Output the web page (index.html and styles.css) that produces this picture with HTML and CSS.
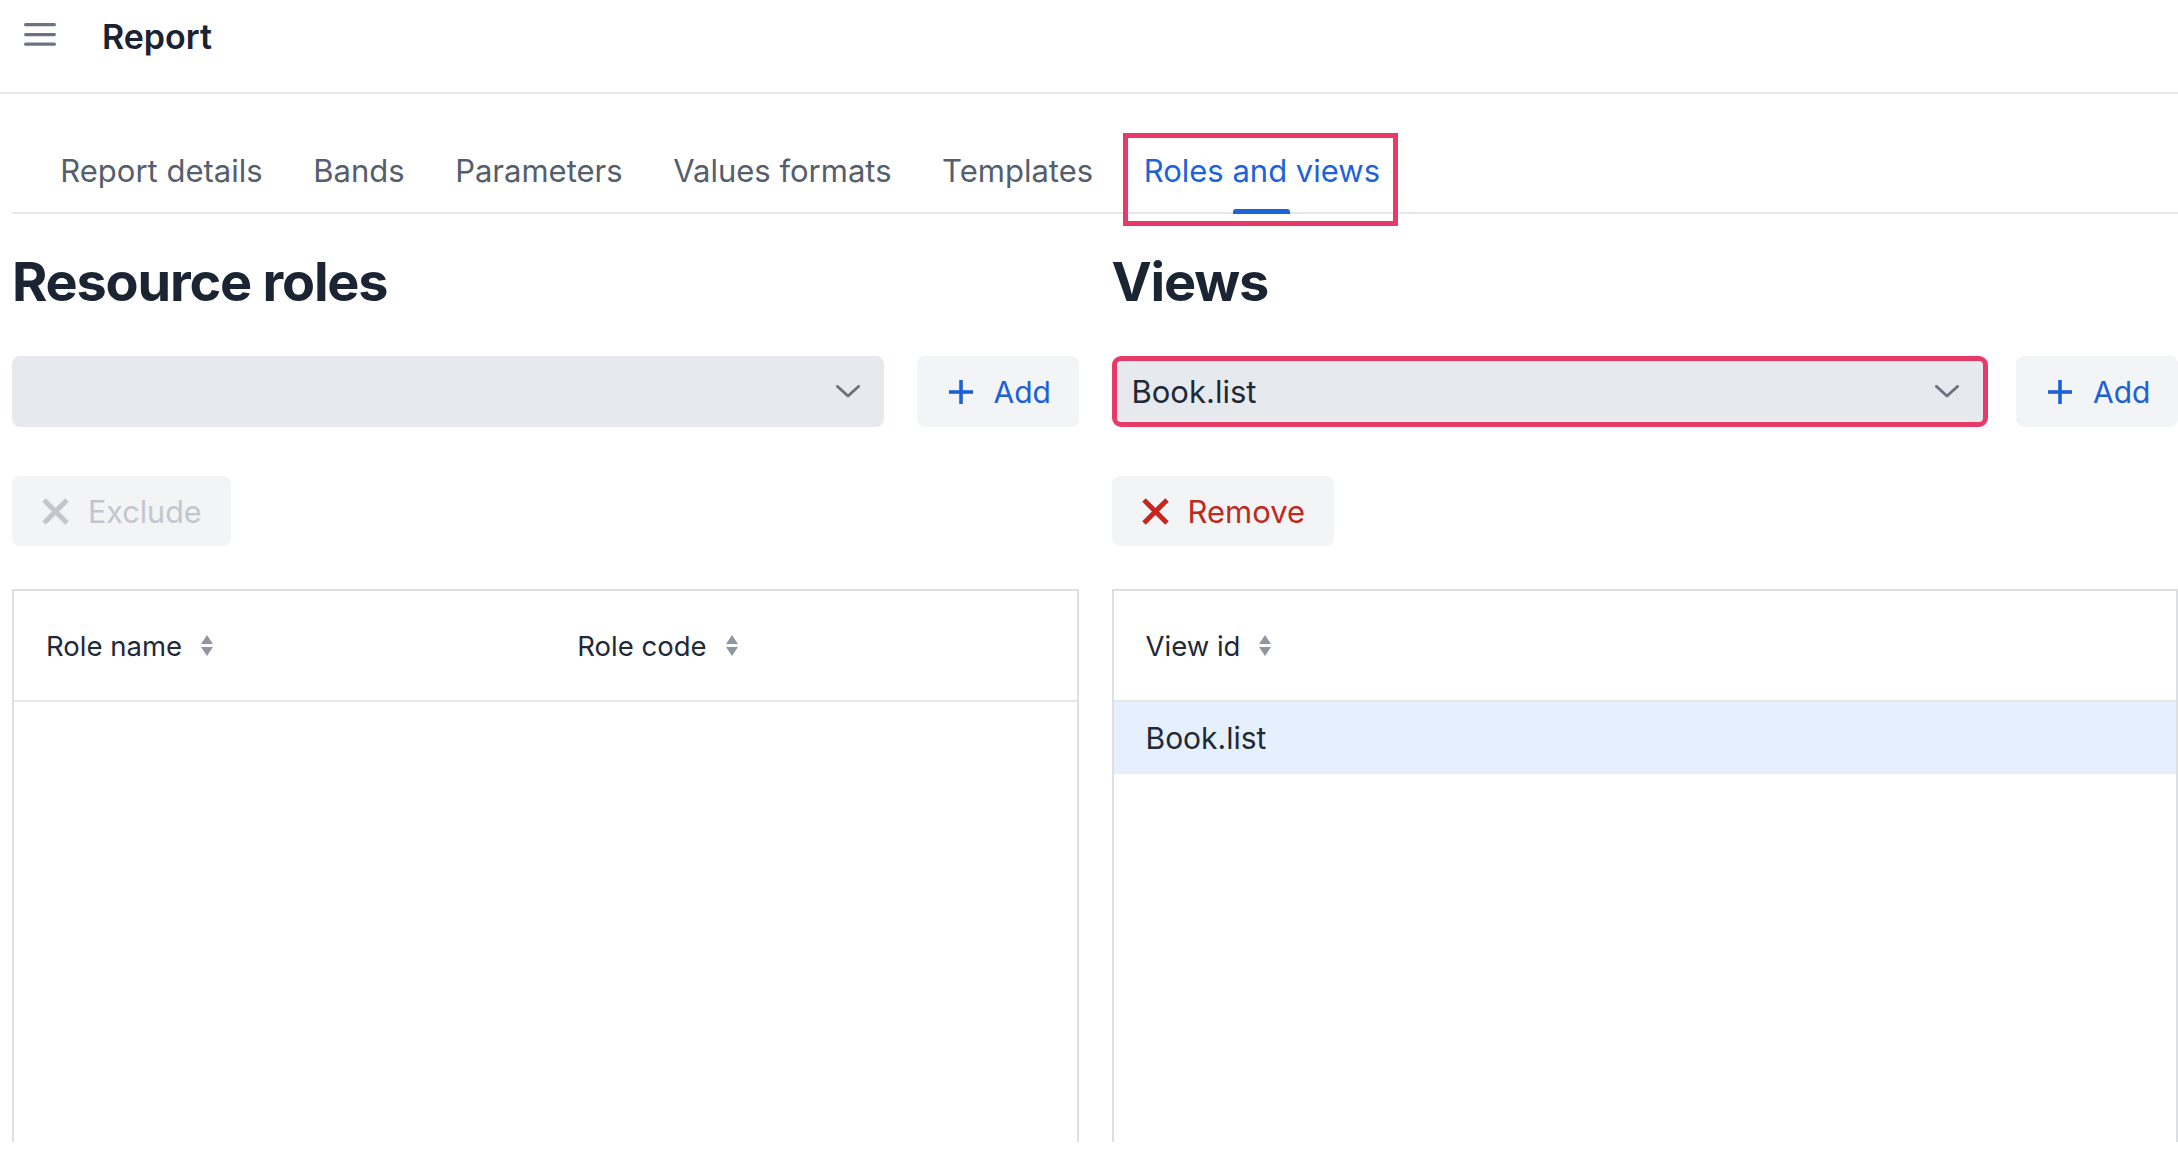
FILE: index.html
```html
<!DOCTYPE html>
<html lang="en">
<head>
<meta charset="utf-8">
<title>Report</title>
<link rel="stylesheet" href="styles.css">
</head>
<body>
<header class="topbar">
  <button class="menu-btn" type="button" aria-label="Menu">
    <svg width="32" height="24" viewBox="0 0 32 24"><g stroke="#6b7280" stroke-width="3.3" stroke-linecap="round"><line x1="1.7" y1="1.7" x2="30.3" y2="1.7"/><line x1="1.7" y1="11.6" x2="30.3" y2="11.6"/><line x1="1.7" y1="21.2" x2="30.3" y2="21.2"/></g></svg>
  </button>
  <h1 class="app-title">Report</h1>
</header>
<main class="page">
  <nav class="tabs">
    <a class="tab">Report details</a>
    <a class="tab">Bands</a>
    <a class="tab">Parameters</a>
    <a class="tab">Values formats</a>
    <a class="tab">Templates</a>
    <a class="tab tab--active">Roles and views</a>
  </nav>
  <div class="panels">
    <section class="panel">
      <h2 class="panel-title">Resource roles</h2>
      <div class="picker-row">
        <div class="select">
          <span class="select-value"></span>
          <svg class="chevron" width="24" height="13" viewBox="0 0 24 13"><polyline points="1.5,1.5 12,11 22.5,1.5" fill="none" stroke="#6b7280" stroke-width="3" stroke-linecap="round" stroke-linejoin="round"/></svg>
        </div>
        <button class="btn btn-add" type="button">
          <svg width="24" height="24" viewBox="0 0 24 24"><g stroke="currentColor" stroke-width="3.6"><line x1="12" y1="0" x2="12" y2="24"/><line x1="0" y1="12" x2="24" y2="12"/></g></svg>
          <span>Add</span>
        </button>
      </div>
      <div class="actions">
        <button class="btn btn-action btn-action--disabled" type="button" disabled>
          <svg width="27" height="27" viewBox="0 0 27 27"><g stroke="currentColor" stroke-width="5"><line x1="2" y1="2" x2="25" y2="25"/><line x1="25" y1="2" x2="2" y2="25"/></g></svg>
          <span>Exclude</span>
        </button>
      </div>
      <div class="table">
        <div class="table-head table-head--two">
          <div class="th">Role name
            <svg class="sort" width="14" height="21" viewBox="0 0 14 21"><polygon points="7,0 13,9 1,9" fill="#8f96a2"/><polygon points="1,12 13,12 7,21" fill="#8f96a2"/></svg>
          </div>
          <div class="th">Role code
            <svg class="sort" width="14" height="21" viewBox="0 0 14 21"><polygon points="7,0 13,9 1,9" fill="#8f96a2"/><polygon points="1,12 13,12 7,21" fill="#8f96a2"/></svg>
          </div>
        </div>
        <div class="table-body"></div>
      </div>
    </section>
    <section class="panel">
      <h2 class="panel-title">Views</h2>
      <div class="picker-row picker-row--tight">
        <div class="select select--focused">
          <span class="select-value">Book.list</span>
          <svg class="chevron" width="24" height="13" viewBox="0 0 24 13"><polyline points="1.5,1.5 12,11 22.5,1.5" fill="none" stroke="#6b7280" stroke-width="3" stroke-linecap="round" stroke-linejoin="round"/></svg>
        </div>
        <button class="btn btn-add" type="button">
          <svg width="24" height="24" viewBox="0 0 24 24"><g stroke="currentColor" stroke-width="3.6"><line x1="12" y1="0" x2="12" y2="24"/><line x1="0" y1="12" x2="24" y2="12"/></g></svg>
          <span>Add</span>
        </button>
      </div>
      <div class="actions">
        <button class="btn btn-action btn-action--danger" type="button">
          <svg width="27" height="27" viewBox="0 0 27 27"><g stroke="currentColor" stroke-width="5"><line x1="2" y1="2" x2="25" y2="25"/><line x1="25" y1="2" x2="2" y2="25"/></g></svg>
          <span>Remove</span>
        </button>
      </div>
      <div class="table">
        <div class="table-head">
          <div class="th">View id
            <svg class="sort" width="14" height="21" viewBox="0 0 14 21"><polygon points="7,0 13,9 1,9" fill="#8f96a2"/><polygon points="1,12 13,12 7,21" fill="#8f96a2"/></svg>
          </div>
        </div>
        <div class="table-body">
          <div class="tr tr--selected">Book.list</div>
        </div>
      </div>
    </section>
  </div>
</main>
</body>
</html>
```
FILE: styles.css
```css
* { box-sizing: border-box; }
html, body { margin: 0; padding: 0; background: #fff; }
body {
  font-family: Inter, "Noto Sans", "Liberation Sans", sans-serif;
  color: #1f2937;
  width: 2178px;
  height: 1164px;
  overflow: hidden;
}

.topbar {
  height: 94px;
  border-bottom: 2px solid #e5e7eb;
  display: flex;
  align-items: flex-start;
  padding: 17px 0 0 24px;
}
.menu-btn {
  border: none;
  background: none;
  padding: 0;
  margin-top: 6px;
  width: 32px;
  height: 24px;
  display: block;
}
.menu-btn svg { display: block; }
.app-title {
  margin: 0 0 0 46px;
  font-size: 34px;
  line-height: 40px;
  font-weight: 600;
  color: #1a2331;
}

.page { padding-left: 12px; }

.tabs {
  margin-top: 43px;
  display: flex;
  border-bottom: 2px solid #e5e7eb;
  padding-left: 23px;
}
.tab {
  position: relative;
  padding: 14px 25.3px 21px;
  font-size: 31px;
  line-height: 40px;
  color: #545e6c;
  white-space: nowrap;
}
.tab--active { color: #1e62d8; }
.tab--active::before {
  content: "";
  position: absolute;
  left: 50%;
  bottom: -2px;
  width: 57px;
  height: 5px;
  margin-left: -29px;
  background: #1e62d8;
  border-radius: 3px 3px 0 0;
}
.tab--active::after {
  content: "";
  position: absolute;
  top: -4px;
  bottom: -14px;
  left: 5px;
  right: 7px;
  border: 5px solid #e83a69;
}

.panels {
  display: grid;
  grid-template-columns: 1fr 1fr;
  column-gap: 33px;
}
.panel { min-width: 0; }
.panel-title {
  margin: 35px 0 0;
  font-size: 54px;
  line-height: 66px;
  font-weight: 700;
  letter-spacing: -1.2px;
  color: #1b2433;
}

.picker-row {
  margin-top: 41px;
  height: 71px;
  display: flex;
  gap: 33px;
}
.picker-row--tight { gap: 28px; }
.select {
  flex: 1;
  background: #e6e9ed;
  border-radius: 8px;
  display: flex;
  align-items: center;
  justify-content: space-between;
  padding: 0 24px 0 21px;
}
.select--focused {
  border: 5px solid #e83a69;
  padding: 0 24px 0 15px;
  border-radius: 9px;
}
.select-value {
  font-size: 31px;
  color: #1f2937;
}
.chevron { display: block; flex: none; }

.btn {
  border: none;
  font-family: inherit;
  display: flex;
  align-items: center;
  background: #f3f4f6;
  border-radius: 8px;
  font-size: 30px;
  cursor: pointer;
}
.btn svg { display: block; flex: none; }
.btn-add {
  width: 162px;
  flex: none;
  padding: 0 0 0 32px;
  gap: 21px;
  color: #1d60d6;
}

.actions { margin-top: 49px; display: flex; }
.btn-action {
  height: 70px;
  padding: 0 29px 0 30px;
  gap: 19px;
  font-size: 30.5px;
}
.btn-action--disabled { color: #c3c7cd; cursor: default; }
.btn-action--danger { color: #bf2a1f; font-size: 31px; }
.btn-action--danger svg { color: #c8261d; }

.table {
  margin-top: 43px;
  height: 553px;
  border: 2px solid #dcdfe3;
  border-bottom: none;
}
.table-head {
  height: 111px;
  border-bottom: 2px solid #e5e7eb;
  display: grid;
  grid-template-columns: 1fr;
}
.table-head--two { grid-template-columns: 1fr 1fr; }
.th {
  display: flex;
  align-items: center;
  padding-left: 32px;
  font-size: 27.5px;
  color: #1f2937;
  gap: 18px;
}
.sort { display: block; }
.tr {
  height: 72px;
  display: flex;
  align-items: center;
  padding-left: 32px;
  font-size: 30px;
  color: #1f2937;
}
.tr--selected { background: #e6effd; }
```
